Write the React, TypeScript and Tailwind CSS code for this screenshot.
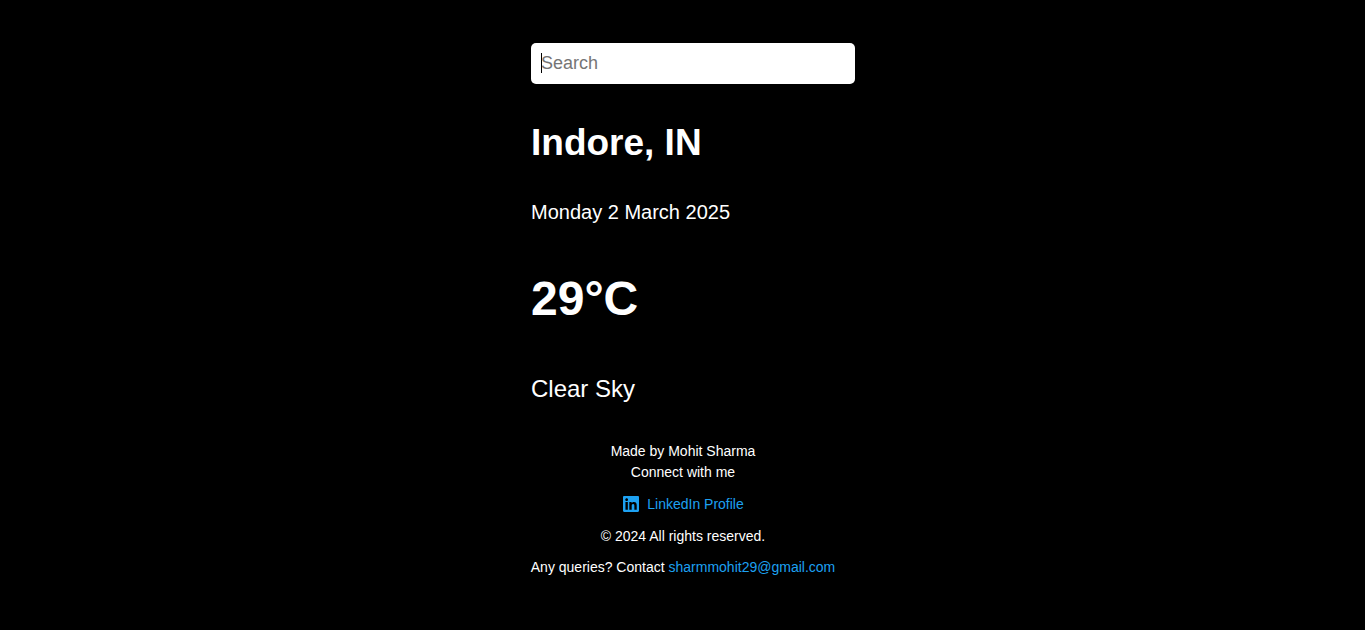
import { useState } from "react";

function LinkedInIcon() {
  return (
    <svg viewBox="0 32 448 448" className="mb-px size-4 fill-current" aria-hidden="true">
      <path d="M416 32H31.900C14.300 32 0 46.500 0 64.300v383.400C0 465.500 14.300 480 31.900 480H416c17.600 0 32-14.500 32-32.300V64.300c0-17.800-14.400-32.300-32-32.300zM135.400 416H69V202.200h66.500V416zm-33.200-243c-21.300 0-38.500-17.300-38.500-38.500S80.900 96 102.200 96c21.200 0 38.500 17.300 38.500 38.500 0 21.300-17.200 38.500-38.500 38.500zm282.100 243h-66.400V312c0-24.800-.5-56.700-34.500-56.700-34.600 0-39.900 27-39.900 54.900V416h-66.400V202.200h63.700v29.200h.9c8.900-16.800 30.600-34.500 62.900-34.500 67.200 0 79.700 44.300 79.700 101.900V416z" />
    </svg>
  );
}

export default function App() {
  const [query, setQuery] = useState("");

  return (
    <main className="flex min-h-screen justify-center bg-black font-['Liberation_Sans',Arial,sans-serif] text-white">
      <div className="flex w-[305px] flex-col pt-[43px] pb-10 pl-px">
        <div className="relative w-81">
          <input
            type="search"
            aria-label="Search"
            placeholder="Search"
            autoFocus
            value={query}
            onChange={(event) => setQuery(event.target.value)}
            className={`block h-[41px] w-full rounded-[5px] bg-white px-[10px] text-lg text-black outline-none placeholder:text-[#757575] ${query ? "caret-black" : "caret-transparent"}`}
          />
          {!query && (
            <span
              aria-hidden="true"
              className="pointer-events-none absolute top-[10px] left-[10px] h-5 w-px bg-black"
            />
          )}
        </div>
        <h1 className="mt-9 text-[37px] leading-[46px] font-bold">Indore, IN</h1>
        <p className="mt-[34px] text-xl leading-6">Monday 2 March 2025</p>
        <p className="mt-[47px] text-5xl leading-14 font-bold">29°C</p>
        <p className="mt-12 text-2xl leading-7">Clear Sky</p>
        <footer className="mt-[38px] flex flex-col items-center gap-[11px] text-sm leading-[21px] whitespace-nowrap">
          <p className="text-center">
            Made by Mohit Sharma
            <br />
            Connect with me
          </p>
          <a href="https://www.linkedin.com" className="flex items-center gap-2 pl-px text-[#1da1f2]">
            <LinkedInIcon />
            LinkedIn Profile
          </a>
          <p>© 2024 All rights reserved.</p>
          <p className="-mt-px">
            Any queries? Contact{" "}
            <a href="mailto:sharmmohit29@gmail.com" className="text-[#1da1f2]">
              sharmmohit29@gmail.com
            </a>
          </p>
        </footer>
      </div>
    </main>
  );
}
